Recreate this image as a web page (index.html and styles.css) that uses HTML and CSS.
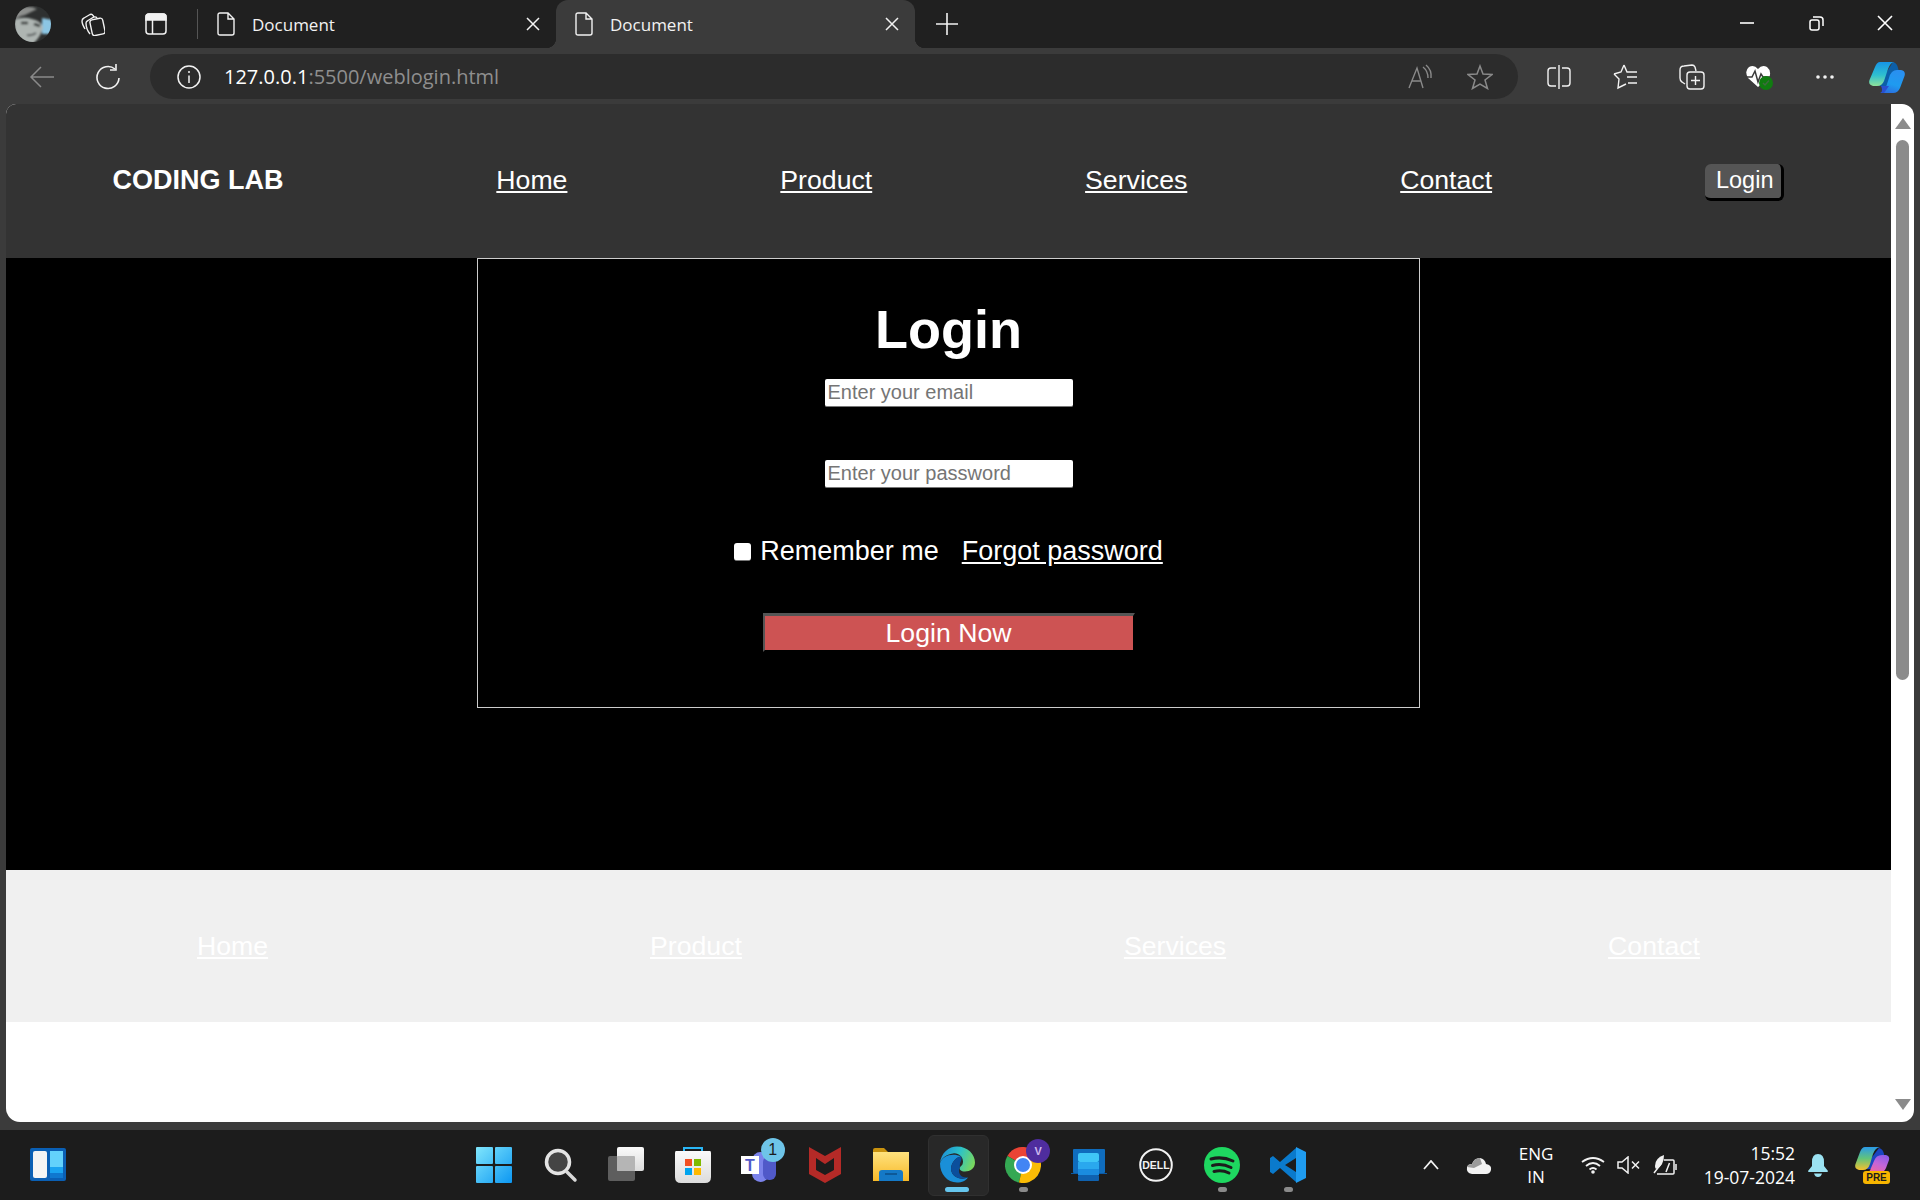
FILE: index.html
```html
<!DOCTYPE html>
<html>

<head>
    <meta name="viewport" content="width=device-width,initial-scale=1.0">
    <title>Document</title>
    <link rel="stylesheet" href="styles.css">
</head>

<body>
    <svg width="0" height="0" class="defs">
        <defs>
            <linearGradient id="copilot-a" x1="0.2" y1="0" x2="0.2" y2="1">
                <stop offset="0" stop-color="#1694e6" />
                <stop offset="0.55" stop-color="#2fc0cf" />
                <stop offset="1" stop-color="#8fe29a" />
            </linearGradient>
            <linearGradient id="copilot-b" x1="0.6" y1="0" x2="0.3" y2="1">
                <stop offset="0" stop-color="#2a8ff0" />
                <stop offset="0.6" stop-color="#1e9bf0" />
                <stop offset="1" stop-color="#2b6fe0" />
            </linearGradient>
            <linearGradient id="copilot-c" x1="0" y1="0" x2="0" y2="1">
                <stop offset="0" stop-color="#2a9ae8" />
                <stop offset="0.5" stop-color="#62c47a" />
                <stop offset="1" stop-color="#f5c02d" />
            </linearGradient>
            <linearGradient id="copilot-d" x1="0.8" y1="0" x2="0.3" y2="1">
                <stop offset="0" stop-color="#8a5ce8" />
                <stop offset="0.5" stop-color="#c465d8" />
                <stop offset="1" stop-color="#f2669e" />
            </linearGradient>
            <linearGradient id="win-tile" gradientUnits="userSpaceOnUse" x1="0" y1="0" x2="36" y2="36">
                <stop offset="0" stop-color="#80e6fc" />
                <stop offset="1" stop-color="#0c97f2" />
            </linearGradient>
            <linearGradient id="folder" x1="0" y1="0" x2="0" y2="1">
                <stop offset="0" stop-color="#ffe27e" />
                <stop offset="1" stop-color="#f7b928" />
            </linearGradient>
            <linearGradient id="edge-top" x1="0" y1="0.3" x2="1" y2="0.6">
                <stop offset="0" stop-color="#1d8fd8" />
                <stop offset="0.5" stop-color="#2cc2c8" />
                <stop offset="1" stop-color="#7ad85c" />
            </linearGradient>
            <linearGradient id="front-pane" x1="0" y1="0" x2="0" y2="1">
                <stop offset="0" stop-color="#fafafa" />
                <stop offset="1" stop-color="#dcdcdc" />
            </linearGradient>
            <filter id="soft">
                <feGaussianBlur stdDeviation="1" />
            </filter>
        </defs>
    </svg>

    <div class="tabbar">
        <svg class="avatar" width="36" height="36" viewBox="0 0 36 36">
            <clipPath id="avatar-clip">
                <circle cx="18" cy="18" r="18" />
            </clipPath>
            <g clip-path="url(#avatar-clip)">
                <rect width="36" height="36" fill="#2e3030" />
                <g filter="url(#soft)">
                    <path d="M27 12 L38 14 V28 L27 28Z" fill="#8cc6e4" />
                    <path d="M-1 14 Q8 10 17 13 Q26 15 28 21 Q26 31 18 38 H4 Q-1 28 -1 14Z" fill="#aeb5b2" />
                    <path d="M2 4 Q12 -2 22 3 L10 9 Q4 10 0 14Z" fill="#8d8f8d" />
                    <path d="M6 17 L13 17 M19 18 L25 20" stroke="#2f3332" stroke-width="2.500" fill="none" />
                    <path d="M12 29 Q17 30 21 27" stroke="#55595a" stroke-width="2" fill="none" />
                </g>
            </g>
        </svg>
        <svg class="collections-btn" width="24" height="24" viewBox="0 0 24 24" fill="none" stroke="#f2f2f2" stroke-width="1.400">
            <path d="M4 17 Q1 12 1 9 Q1 7 3 6 L9 2.500 Q11 1.500 12 3.500 L13 5" />
            <path d="M9 22 Q5 17 5 11 Q5 9.500 7 8.500 L13 5 Q15 4.500 16 6" />
            <rect x="10" y="7" width="13" height="16" rx="2.500" transform="rotate(-12 16 15)" />
        </svg>
        <svg class="tabs-btn" width="22" height="22" viewBox="0 0 22 22" fill="none" stroke="#f2f2f2" stroke-width="1.500">
            <rect x="1" y="1" width="20" height="20" rx="3" />
            <path d="M1 4 Q1 1 4 1 H18 Q21 1 21 4 V7 H1Z" fill="#f2f2f2" />
            <path d="M7.500 7 V21" />
        </svg>
        <span class="tab-sep"></span>
        <div class="tab">
            <svg class="file-icon" width="18" height="24" viewBox="0 0 18 24" fill="none" stroke="#f2f2f2" stroke-width="1.400">
                <path d="M3 1 H11 L17 7 V21 Q17 23 15 23 H3 Q1 23 1 21 V3 Q1 1 3 1Z M11 1 V7 H17" />
            </svg>
            <span class="tab-title">Document</span>
            <svg class="tab-close" width="14" height="14" viewBox="0 0 14 14" stroke="#f2f2f2" stroke-width="1.500">
                <path d="M1 1 L13 13 M13 1 L1 13" />
            </svg>
        </div>
        <div class="tab active">
            <svg class="file-icon" width="18" height="24" viewBox="0 0 18 24" fill="none" stroke="#f2f2f2" stroke-width="1.400">
                <path d="M3 1 H11 L17 7 V21 Q17 23 15 23 H3 Q1 23 1 21 V3 Q1 1 3 1Z M11 1 V7 H17" />
            </svg>
            <span class="tab-title">Document</span>
            <svg class="tab-close" width="14" height="14" viewBox="0 0 14 14" stroke="#f2f2f2" stroke-width="1.500">
                <path d="M1 1 L13 13 M13 1 L1 13" />
            </svg>
        </div>
        <svg class="new-tab" width="22" height="22" viewBox="0 0 22 22" stroke="#f2f2f2" stroke-width="1.600">
            <path d="M11 0 V22 M0 11 H22" />
        </svg>
        <div class="window-btns">
            <svg width="16" height="16" viewBox="0 0 16 16" stroke="#fff" stroke-width="1.600">
                <path d="M1 8 H15" />
            </svg>
            <svg width="16" height="16" viewBox="0 0 16 16" fill="none" stroke="#fff" stroke-width="1.500">
                <rect x="2" y="5" width="9" height="10" rx="2" />
                <path d="M5 2 H12 Q15 2 15 5 V11" />
            </svg>
            <svg width="16" height="16" viewBox="0 0 16 16" stroke="#fff" stroke-width="1.600">
                <path d="M1 1 L15 15 M15 1 L1 15" />
            </svg>
        </div>
    </div>

    <div class="toolbar">
        <svg class="nav-icon back" width="26" height="24" viewBox="0 0 26 24" fill="none" stroke="#8a8a8a" stroke-width="1.500">
            <path d="M25 12 H2 M12 2 L2 12 L12 22" />
        </svg>
        <svg class="nav-icon reload" width="26" height="26" viewBox="0 0 26 26" fill="none" stroke="#f2f2f2" stroke-width="1.600">
            <path d="M20 5 A11 11 0 1 0 24 14" />
            <path d="M21 0 V6 H15" />
        </svg>
        <div class="address">
            <svg width="24" height="24" viewBox="0 0 24 24" fill="none" stroke="#f2f2f2" stroke-width="1.500">
                <circle cx="12" cy="12" r="11" />
                <path d="M12 10.500 V18 M12 6 V8" />
            </svg>
            <span class="url"><span class="host">127.0.0.1</span>:5500/weblogin.html</span>
            <svg class="read-aloud" width="26" height="26" viewBox="0 0 26 26" fill="none" stroke="#8a8a8a" stroke-width="1.400">
                <path d="M2 24 L10 4 L16 24 M5 17 H14 M16 3 Q21 7 21 14 M19 1 Q25 6 24 14" />
            </svg>
            <svg class="star" width="26" height="26" viewBox="0 0 26 26" fill="none" stroke="#8a8a8a" stroke-width="1.500">
                <path d="M13 2 L16 10 L25 10.500 L18 16 L20.500 24.500 L13 20 L5.500 24.500 L8 16 L1 10.500 L10 10Z" />
            </svg>
        </div>
        <div class="actions">
            <span class="action">
                <svg width="24" height="26" viewBox="0 0 24 26" fill="none" stroke="#f2f2f2" stroke-width="1.400">
                    <path d="M9 4 H4 Q1 4 1 7 V19 Q1 22 4 22 H9 M15 4 H20 Q23 4 23 7 V19 Q23 22 20 22 H15" />
                    <path d="M12 1 V25" />
                </svg>
            </span>
            <span class="action">
                <svg width="26" height="26" viewBox="0 0 26 26" fill="none" stroke="#f2f2f2" stroke-width="1.400">
                    <path d="M11 1 L14 8 H24 M1 10 L8 8 L11 1 M1 10 L6 15 L5 24 L13 20 M14 13 H24 M15 19 H24" />
                </svg>
            </span>
            <span class="action">
                <svg width="26" height="26" viewBox="0 0 26 26" fill="none" stroke="#f2f2f2" stroke-width="1.400">
                    <path d="M6 20 L3 18 Q1 17 1 14 V6 Q1 2 5 2 L13 1 Q15 1 16 3 L17 7" />
                    <rect x="8" y="8" width="17" height="17" rx="3" />
                    <path d="M16.500 12 V21 M12 16.500 H21" />
                </svg>
            </span>
            <span class="action">
                <svg width="28" height="26" viewBox="0 0 28 26">
                    <path d="M13 23 L3 14 Q-1 7 4 3 Q9 0 13 5 Q17 0 22 3 Q27 7 24 14Z" fill="#fff" />
                    <path d="M0 13 H7 L10 7 L13 18 L16 10 L18 13 H26" fill="none" stroke="#3b3b3b" stroke-width="1.500" />
                    <circle cx="21" cy="19" r="7" fill="#107c10" />
                    <path d="M18 19 L20 21 L24 16.500" fill="none" stroke="#3f6a3f" stroke-width="1.500" />
                </svg>
            </span>
            <span class="action">
                <svg width="20" height="6" viewBox="0 0 20 6" fill="#f2f2f2">
                    <circle cx="3" cy="3" r="1.800" />
                    <circle cx="10" cy="3" r="1.800" />
                    <circle cx="17" cy="3" r="1.800" />
                </svg>
            </span>
            <span class="action last">
                <svg width="36" height="32" viewBox="0 0 36 32">
                    <path d="M24 1 Q28 2 29 7 L31 14 L22 25 H9Z" fill="#0c5fa8" />
                    <path d="M11 1 H25 Q21 2 19 8 L15 20 Q13 25 8 25 H4 Q-1 24 0.500 19 L6 6 Q8 1 11 1Z" fill="url(#copilot-a)" />
                    <path d="M20 17 Q22 9 28 9 H32 Q37 10 35.500 15 L31 27 Q29 32 24 32 H11 Q15 31 17 26Z" fill="url(#copilot-b)" />
                    <path d="M12 25 H20 L15 32 H12 Q14 29 12 25Z" fill="#2a4fd0" />
                </svg>
            </span>
        </div>
    </div>

    <div class="window-body">
        <div class="page">
            <header class="site-nav">
                <span class="logo">CODING LAB</span>
                <a href="#">Home</a>
                <a href="#">Product</a>
                <a href="#">Services</a>
                <a href="#">Contact</a>
                <button class="nav-login">Login</button>
            </header>
            <main class="hero">
                <form class="login-box">
                    <h1>Login</h1>
                    <input class="field" type="text" placeholder="Enter your email">
                    <input class="field second" type="password" placeholder="Enter your password">
                    <div class="options">
                        <input class="check" type="checkbox">
                        <span>Remember me</span>
                        <a href="#">Forgot password</a>
                    </div>
                    <button class="submit" type="button">Login Now</button>
                </form>
            </main>
            <footer class="site-footer">
                <a href="#">Home</a>
                <a href="#">Product</a>
                <a href="#">Services</a>
                <a href="#">Contact</a>
            </footer>
        </div>
        <div class="scrollbar">
            <span class="arrow up"></span>
            <span class="thumb"></span>
            <span class="arrow down"></span>
        </div>
    </div>

    <div class="taskbar">
        <div class="task-left">
            <svg width="36" height="34" viewBox="0 0 36 34">
                <rect width="36" height="33" rx="2" fill="#0a5fb4" />
                <rect x="3" y="3" width="14" height="27" rx="2" fill="#f4f4f4" />
                <rect x="20" y="3" width="13" height="16" fill="#63d2fb" />
                <rect x="20" y="19" width="13" height="6" fill="#1aa3f0" />
                <rect x="20" y="25" width="13" height="5" fill="#0f78cf" />
            </svg>
        </div>
        <div class="task-center">
            <span class="slot">
                <svg width="36" height="36" viewBox="0 0 36 36" fill="url(#win-tile)">
                    <rect width="17" height="17" rx="1" />
                    <rect x="19" width="17" height="17" rx="1" />
                    <rect y="19" width="17" height="17" rx="1" />
                    <rect x="19" y="19" width="17" height="17" rx="1" />
                </svg>
            </span>
            <span class="slot">
                <svg class="search-icon" width="34" height="36" viewBox="0 0 34 36" fill="none">
                    <circle cx="14" cy="15" r="11.500" fill="#444" stroke="#e4e4e4" stroke-width="3.500" />
                    <path d="M23 25 L31 33" stroke="#d8d8d8" stroke-width="3.500" stroke-linecap="round" />
                </svg>
            </span>
            <span class="slot">
                <svg width="36" height="36" viewBox="0 0 36 36">
                    <rect y="9" width="27" height="25" rx="2" fill="#5e5e5e" />
                    <rect x="9" y="0" width="27" height="24" rx="2" fill="url(#front-pane)" />
                    <rect x="9" y="9" width="18" height="15" rx="1" fill="#b5b5b5" />
                </svg>
            </span>
            <span class="slot">
                <svg width="36" height="36" viewBox="0 0 36 36">
                    <path d="M9 6 V1 H27 V6" fill="none" stroke="#29b6f6" stroke-width="2" />
                    <path d="M1 4 H35 Q36 4 36 6 V30 Q36 36 30 36 H6 Q0 36 0 30 V6 Q0 4 1 4Z" fill="url(#front-pane)" />
                    <rect x="10" y="12" width="7" height="7" fill="#f25022" />
                    <rect x="19" y="12" width="7" height="7" fill="#7fba00" />
                    <rect x="10" y="21" width="7" height="7" fill="#00a4ef" />
                    <rect x="19" y="21" width="7" height="7" fill="#ffb900" />
                </svg>
            </span>
            <span class="slot">
                <svg width="36" height="34" viewBox="0 0 36 34">
                    <rect x="11" y="4" width="17" height="30" rx="8.500" fill="#7b83eb" />
                    <rect x="22" y="8" width="13" height="24" rx="6" fill="#5059c9" />
                    <rect y="8" width="18" height="18" fill="#fff" />
                    <text x="9" y="23" class="teams-t">T</text>
                </svg>
                <span class="badge teams-badge">1</span>
            </span>
            <span class="slot">
                <svg width="32" height="36" viewBox="0 0 32 36" fill="#b52a27">
                    <path d="M0 0 L16 9 L32 0 V27 L16 36 L0 27Z M7 11 V23 L16 28 L25 23 V11 L16 17Z" fill-rule="evenodd" />
                </svg>
            </span>
            <span class="slot">
                <svg width="36" height="33" viewBox="0 0 36 33">
                    <path d="M0 2 Q0 0 2 0 H11 L15 4 V10 H0Z" fill="#c9920e" />
                    <path d="M0 4 H36 V33 H0Z" fill="url(#folder)" />
                    <path d="M6 33 V25 Q6 22 9 22 H27 Q30 22 30 25 V33Z" fill="#1479c7" />
                    <path d="M12 26 H24" stroke="#0b4f88" stroke-width="1.500" />
                </svg>
            </span>
            <span class="slot current">
                <svg width="36" height="37" viewBox="0 0 36 36">
                    <path d="M1 17 C1 27 8 36 18 36 C23 36 27 34 29 31 C22 34 13 31 12 23 C12 17 16 11 22 10 C14 6 3 9 1 17Z" fill="#1a8fd8" />
                    <path d="M12 23 C13 31 22 34 29 31 C22 32 18 26 21 21 C20 16 24 13 22 10 C16 11 12 17 12 23Z" fill="#0b4f9c" />
                    <path d="M1 17 C2 6 10 0 18 0 C29 0 36 8 36 16 C36 22 31 25 26 25 C22 25 20 23 21 21 C22 19 24 19 24 15 C24 10 19 6 14 7 C7 8 2 12 1 17Z" fill="url(#edge-top)" />
                </svg>
                <span class="indicator active-bar"></span>
            </span>
            <span class="slot">
                <svg width="36" height="36" viewBox="0 0 36 36">
                    <path d="M18 18 L33.600 9 A18 18 0 0 0 2.400 9Z" fill="#ea4335" />
                    <path d="M18 18 L2.400 9 A18 18 0 0 0 14 35.600Z" fill="#34a853" />
                    <path d="M18 18 L14 35.600 A18 18 0 0 0 33.600 9Z" fill="#fbbc05" />
                    <circle cx="18" cy="18" r="9" fill="#fff" />
                    <circle cx="18" cy="18" r="7" fill="#4285f4" />
                </svg>
                <span class="badge chrome-badge">V</span>
                <span class="indicator"></span>
            </span>
            <span class="slot">
                <svg width="36" height="32" viewBox="0 0 36 32">
                    <rect x="2" y="0" width="32" height="24" rx="1" fill="#0f6cbd" />
                    <path d="M0 24 H36 V25 H0Z" fill="#0b5aa5" />
                    <rect x="7" y="4" width="21" height="9" rx="2" fill="#3fc6f7" />
                    <rect x="7" y="13" width="21" height="7" fill="#2aa8ee" />
                    <rect x="7" y="20" width="21" height="6" fill="#1a8cdf" />
                    <rect x="7" y="26" width="21" height="6" rx="1" fill="#0f62b0" />
                </svg>
            </span>
            <span class="slot">
                <svg width="34" height="34" viewBox="0 0 34 34" fill="none">
                    <circle cx="17" cy="17" r="15.800" stroke="#f2f2f2" stroke-width="2" />
                    <text x="17" y="21" class="dell-t">DELL</text>
                </svg>
            </span>
            <span class="slot">
                <svg width="36" height="36" viewBox="0 0 36 36" fill="none">
                    <circle cx="18" cy="18" r="18" fill="#1ed760" />
                    <path d="M7 12 Q18 9 29 14 M8.500 18.500 Q18 16 27 20.500 M10 24.500 Q18 22.500 25 26" stroke="#1c1c1c" stroke-width="3" stroke-linecap="round" />
                </svg>
                <span class="indicator"></span>
            </span>
            <span class="slot">
                <svg width="36" height="36" viewBox="0 0 36 36">
                    <path d="M26 1 L10 15 L3 9 L0 11 V25 L3 27 L10 21 L26 35 V25 L15 18 L26 11Z" fill="#0a7acc" />
                    <path d="M26 0 L36 5 V31 L26 36Z" fill="#1f9cf0" />
                </svg>
                <span class="indicator"></span>
            </span>
        </div>
        <div class="tray">
            <svg class="tray-caret" width="16" height="10" viewBox="0 0 16 10" fill="none" stroke="#f2f2f2" stroke-width="1.800">
                <path d="M1 9 L8 1 L15 9" />
            </svg>
            <svg class="tray-cloud" width="26" height="18" viewBox="0 0 26 18">
                <path d="M6 18 Q0 17 1 11 Q2 8 6 8 Q8 2 14 2 Q19 3 20 8 Q26 9 25 14 Q24 18 20 18Z" fill="#f2f2f2" />
                <path d="M1 11 Q2 8 6 8 Q8 2 14 2 L16 8 L8 12Z" fill="#9a9a9a" />
            </svg>
            <div class="lang">ENG<br>IN</div>
            <svg class="tray-wifi" width="24" height="18" viewBox="0 0 24 18" fill="none" stroke="#f2f2f2" stroke-width="1.800">
                <path d="M1 6 Q12 -2 23 6 M5 10 Q12 4 19 10 M8.500 13.500 Q12 10.500 15.500 13.500" />
                <circle cx="12" cy="16" r="1.800" fill="#f2f2f2" stroke="none" />
            </svg>
            <svg class="tray-sound" width="23" height="18" viewBox="0 0 23 18" fill="none" stroke="#f2f2f2" stroke-width="1.500">
                <path d="M1 6 H5 L11 1 V17 L5 12 H1Z M15 5.500 L22 12.500 M22 5.500 L15 12.500" />
            </svg>
            <svg class="tray-battery" width="24" height="20" viewBox="0 0 24 20" fill="none" stroke="#f2f2f2" stroke-width="1.500">
                <path d="M11 5 H20 Q21 5 21 6 V18 Q21 19 20 19 H4 M23 9 V15 M16.500 8 L13 17" />
                <path d="M11 0 Q2 3 2 11 Q2 13 3 14 Q11 11 11 0Z" fill="#f2f2f2" stroke="none" />
                <path d="M1 18 Q4 14 8 9" />
            </svg>
            <div class="clock">
                <div>15:52</div>
                <div>19-07-2024</div>
            </div>
            <svg class="tray-bell" width="20" height="23" viewBox="0 0 20 23">
                <path d="M10 0 Q16 0 16 8 V12 L20 17 Q20 18 19 18 H1 Q0 18 0 17 L4 12 V8 Q4 0 10 0Z M6 19.500 H14 Q13 23 10 23 Q7 23 6 19.500Z" fill="#9be2f2" />
            </svg>
            <span class="tray-copilot">
                <svg width="35" height="26" viewBox="0 0 35 26">
                    <path d="M24 1 Q28 2 29 7 L30 12 L20 22 H8Z" fill="#1a45c0" />
                    <path d="M10 0 H25 Q20 1 18 7 L15 17 Q13 23 8 23 H4 Q-1 22 0.500 17 L5 5 Q7 0 10 0Z" fill="url(#copilot-c)" />
                    <path d="M19 14 Q21 8 27 8 H31 Q35 9 34 13 L31 21 Q29 26 24 26 H11 Q15 25 16 21Z" fill="url(#copilot-d)" />
                </svg>
                <span class="pre-tag">PRE</span>
            </span>
        </div>
    </div>
</body>

</html>
```

FILE: styles.css
```css
* {
    box-sizing: border-box;
}

html,
body {
    margin: 0;
    padding: 0;
    height: 100%;
    overflow: hidden;
}

body {
    display: flex;
    flex-direction: column;
    width: 1920px;
    height: 1200px;
    background: #3b3b3b;
    font-family: "Liberation Sans", Arial, sans-serif;
}

svg {
    flex-shrink: 0;
}

.defs {
    position: absolute;
}

/* browser tabs */
.tabbar {
    display: flex;
    align-items: center;
    height: 48px;
    background: #202020;
    flex-shrink: 0;
}

.avatar {
    margin-left: 15px;
    margin-top: -1px;
}

.collections-btn {
    margin-left: 30px;
}

.tabs-btn {
    margin-left: 40px;
}

.tab-sep {
    width: 1px;
    height: 30px;
    margin-left: 30px;
    background: #555;
}

.tab {
    display: flex;
    align-items: center;
    width: 358px;
    height: 48px;
    padding-left: 19px;
    flex-shrink: 0;
}

.tab.active {
    position: relative;
    width: 359px;
    background: #3b3b3b;
    border-radius: 12px 12px 0 0;
}

.tab.active::before,
.tab.active::after {
    content: "";
    position: absolute;
    bottom: 0;
    width: 10px;
    height: 10px;
}

.tab.active::before {
    left: -10px;
    background: radial-gradient(circle at 0 0, #202020 10px, #3b3b3b 10.500px);
}

.tab.active::after {
    right: -10px;
    background: radial-gradient(circle at 100% 0, #202020 10px, #3b3b3b 10.500px);
}

.tab-title {
    margin-left: 17px;
    color: #f2f2f2;
    font-family: "Open Sans", sans-serif;
    font-size: 17px;
    flex-grow: 1;
}

.tab-close {
    margin-right: 16px;
}

.new-tab {
    margin-left: 21px;
}

.window-btns {
    display: flex;
    align-items: center;
    gap: 53px;
    margin-left: auto;
    margin-right: 27px;
    margin-top: -2px;
}

/* address row */
.toolbar {
    display: flex;
    align-items: center;
    height: 56px;
    padding-top: 6px;
    padding-bottom: 5px;
    background: #3b3b3b;
    flex-shrink: 0;
}

.back {
    margin-left: 29px;
}

.reload {
    margin-left: 40px;
    margin-right: 29px;
}

.address {
    display: flex;
    align-items: center;
    width: 1368px;
    height: 45px;
    padding-left: 27px;
    padding-right: 25px;
    background: #2c2c2c;
    border-radius: 23px;
    flex-shrink: 0;
}

.url {
    margin-left: 23px;
    flex-grow: 1;
    color: #8f8f8f;
    font-family: "Open Sans", sans-serif;
    font-size: 20px;
}

.host {
    color: #fff;
}

.read-aloud {
    margin-right: 34px;
}

.actions {
    display: flex;
    align-items: center;
    margin-left: 8px;
}

.action {
    display: flex;
    align-items: center;
    justify-content: center;
    width: 66.5px;
    height: 45px;
}

.action.last {
    width: 57px;
}

/* page in the window */
.window-body {
    display: flex;
    height: 1018px;
    padding: 0 6px 0 6px;
    flex-shrink: 0;
}

.page {
    display: flex;
    flex-direction: column;
    width: 1885px;
    background: #fff;
    border-radius: 10px 0 0 14px;
    overflow: hidden;
}

.site-nav {
    display: flex;
    align-items: center;
    justify-content: space-around;
    height: 154px;
    padding-bottom: 2px;
    background: #333;
    color: #fff;
    flex-shrink: 0;
}

.site-nav a,
.site-footer a {
    color: #fff;
    font-size: 26.67px;
}

.logo {
    font-size: 27px;
    font-weight: bold;
}

.nav-login {
    height: 37px;
    margin-top: 4px;
    padding: 0 8px 0 11px;
    color: #fff;
    background: #555;
    border: none;
    border-right: 3px solid #000;
    border-bottom: 3px solid #000;
    border-radius: 6px;
    font-family: inherit;
    font-size: 23.5px;
}

.hero {
    height: 612px;
    background: #000;
    flex-shrink: 0;
}

.login-box {
    display: flex;
    flex-direction: column;
    align-items: center;
    width: 943px;
    height: 450px;
    margin: 0 auto;
    padding-top: 39px;
    border: 1px solid #ccc;
    color: #fff;
}

.login-box h1 {
    margin: 0 0 19px;
    font-size: 54px;
    line-height: 62px;
}

.field {
    width: 248px;
    height: 28px;
    padding: 0 3px;
    border: none;
    border-bottom: 1px solid #777;
    border-radius: 2px;
    background: #fff;
    font-family: inherit;
    font-size: 20px;
}

.field.second {
    margin-top: 53px;
}

.options {
    display: flex;
    align-items: center;
    height: 31px;
    margin-top: 48px;
    font-size: 27px;
}

.check {
    appearance: none;
    width: 17px;
    height: 18px;
    margin: 0 9px 0 0;
    background: #fff;
    border-bottom: 1px solid #777;
    border-radius: 3px;
}

.options a {
    margin-left: 23px;
    color: #fff;
}

.submit {
    width: 372px;
    height: 39px;
    margin-top: 46px;
    padding: 0;
    color: #fff;
    background: #cd5353;
    border-style: solid;
    border-width: 3px 2px 2px 2px;
    border-color: #555 #000 #000 #555;
    font-family: inherit;
    font-size: 26.67px;
}

.site-footer {
    display: flex;
    align-items: center;
    justify-content: space-around;
    height: 152px;
    background: #f0f0f0;
    flex-shrink: 0;
}

/* scrollbar */
.scrollbar {
    display: flex;
    flex-direction: column;
    align-items: center;
    width: 23px;
    padding-top: 14px;
    background: #fff;
    border-radius: 0 12px 12px 0;
}

.arrow {
    width: 0;
    height: 0;
    border-left: 8px solid transparent;
    border-right: 8px solid transparent;
}

.arrow.up {
    border-bottom: 11px solid #8b8b8b;
}

.arrow.down {
    margin-top: auto;
    margin-bottom: 12px;
    border-top: 11px solid #8b8b8b;
}

.thumb {
    width: 13px;
    height: 540px;
    margin-top: 11px;
    background: #8b8b8b;
    border-radius: 7px;
}

/* windows taskbar */
.taskbar {
    display: flex;
    align-items: center;
    height: 70px;
    margin-top: 8px;
    background: #1c1c1c;
    flex-shrink: 0;
}

.task-left {
    display: flex;
    align-items: center;
    width: 461px;
    padding-left: 30px;
}

.task-center {
    display: flex;
    width: 860px;
}

.slot {
    position: relative;
    display: flex;
    flex: 1;
    align-items: center;
    justify-content: center;
    height: 70px;
}

.slot svg {
    margin-bottom: 1px;
}

.slot .search-icon {
    margin-left: 2px;
}

.slot.current::before {
    content: "";
    position: absolute;
    left: 4px;
    top: 5px;
    width: 59px;
    height: 59px;
    background: #282828;
    border: 1px solid #303030;
    border-radius: 6px;
}

.slot.current svg {
    position: relative;
}

.indicator {
    position: absolute;
    left: 29px;
    bottom: 8px;
    width: 9px;
    height: 5px;
    background: #8a8a8a;
    border-radius: 3px;
}

.indicator.active-bar {
    left: 21px;
    width: 24px;
    background: #66c6ee;
}

.badge {
    position: absolute;
    display: flex;
    align-items: center;
    justify-content: center;
    border-radius: 50%;
    font-family: "Liberation Sans", sans-serif;
}

.teams-badge {
    left: 35px;
    top: 8px;
    width: 24px;
    height: 24px;
    background: #6ec4e8;
    color: #1c1c1c;
    font-size: 16px;
}

.chrome-badge {
    left: 36px;
    top: 9px;
    width: 24px;
    height: 24px;
    background: #4f2d9e;
    color: #cdb8ef;
    font-size: 11px;
    font-weight: bold;
}

.teams-t {
    fill: #5059c9;
    font-family: "Liberation Sans", sans-serif;
    font-size: 16px;
    font-weight: bold;
    text-anchor: middle;
}

.dell-t {
    fill: #f2f2f2;
    font-family: "Liberation Sans", sans-serif;
    font-size: 10.500px;
    font-weight: bold;
    text-anchor: middle;
}

.tray {
    display: flex;
    align-items: center;
    flex-grow: 1;
    color: #fff;
    font-family: "Open Sans", sans-serif;
}

.tray-caret {
    margin-left: 102px;
}

.tray-cloud {
    margin-left: 27px;
}

.lang {
    width: 44px;
    margin-left: 22px;
    font-size: 17px;
    line-height: 23px;
    text-align: center;
}

.tray-wifi {
    margin-left: 23px;
}

.tray-sound {
    margin-left: 12px;
}

.tray-battery {
    margin-left: 13px;
}

.clock {
    width: 105px;
    margin-left: 13px;
    font-size: 17.5px;
    line-height: 24px;
    text-align: right;
}

.tray-bell {
    margin-left: 13px;
}

.tray-copilot {
    position: relative;
    display: block;
    width: 35px;
    height: 36px;
    margin-left: 27px;
    margin-top: -1px;
}

.pre-tag {
    position: absolute;
    left: 8px;
    bottom: -1px;
    width: 27px;
    background: #f7b500;
    border-radius: 3px;
    color: #1c1c1c;
    font-family: "Liberation Sans", sans-serif;
    font-size: 10px;
    font-weight: bold;
    line-height: 13px;
    text-align: center;
}
```
